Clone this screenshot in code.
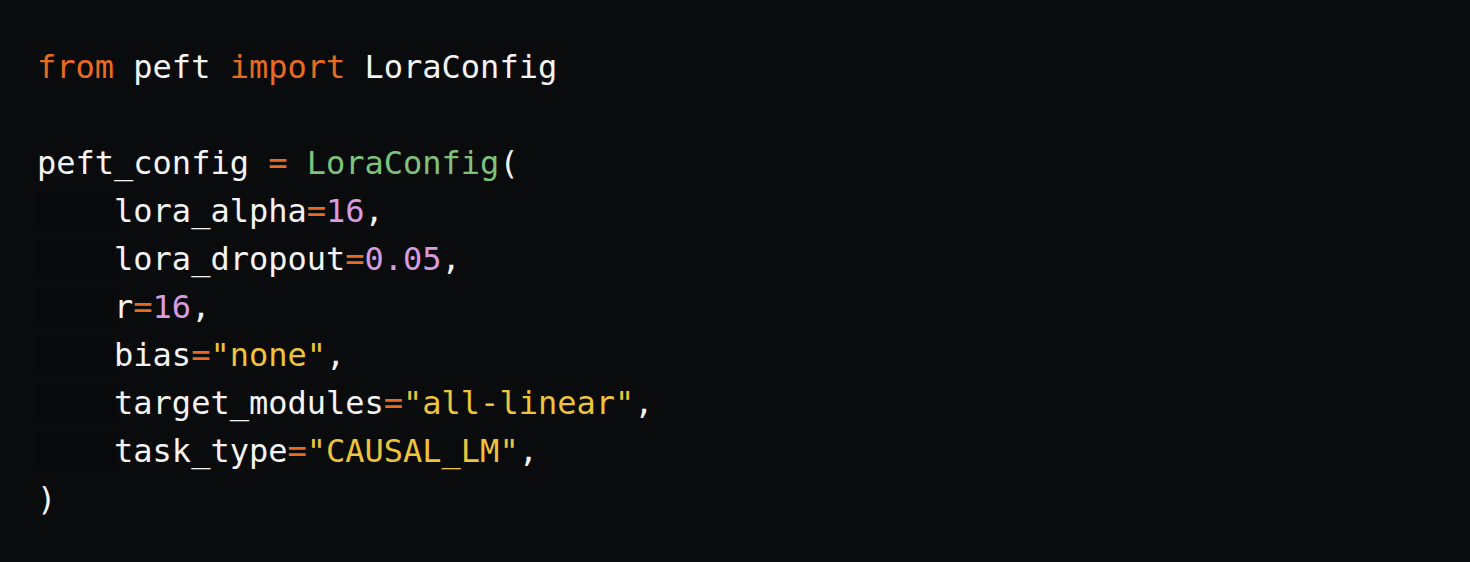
import React from 'react';

// token colours
const K = 'text-[#e96b21]';
const G = 'text-[#7fc27c]';
const N = 'text-[#d79be0]';
const S = 'text-[#edc43a]';

const Indent = () => <span className="bg-[#08090b]">    </span>;

const lines = [
    [[K, 'from'], [null, ' peft '], [K, 'import'], [null, ' LoraConfig']],
    [],
    [[null, 'peft_config '], [K, '='], [null, ' '], [G, 'LoraConfig'], [null, '(']],
    ['i', [null, 'lora_alpha'], [K, '='], [N, '16'], [null, ',']],
    ['i', [null, 'lora_dropout'], [K, '='], [N, '0.05'], [null, ',']],
    ['i', [null, 'r'], [K, '='], [N, '16'], [null, ',']],
    ['i', [null, 'bias'], [K, '='], [S, '"none"'], [null, ',']],
    ['i', [null, 'target_modules'], [K, '='], [S, '"all-linear"'], [null, ',']],
    ['i', [null, 'task_type'], [K, '='], [S, '"CAUSAL_LM"'], [null, ',']],
    [[null, ')']],
];

export default function App() {
    return (
        <div className="w-[1470px] h-[562px] bg-[#0a0b0d] overflow-hidden">
            <pre
                className="pt-[43px] pl-[37px] text-[32px] leading-[48px] text-[#f4f4f4]"
                style={{ fontFamily: '"DejaVu Sans Mono", monospace' }}
            >
                {lines.map((line, i) => (
                    <div key={i} className="h-[48px]">
                        {line.map((tok, j) =>
                            tok === 'i' ? <Indent key={j} /> : <span key={j} className={tok[0] || ''}>{tok[1]}</span>
                        )}
                    </div>
                ))}
            </pre>
        </div>
    );
}
